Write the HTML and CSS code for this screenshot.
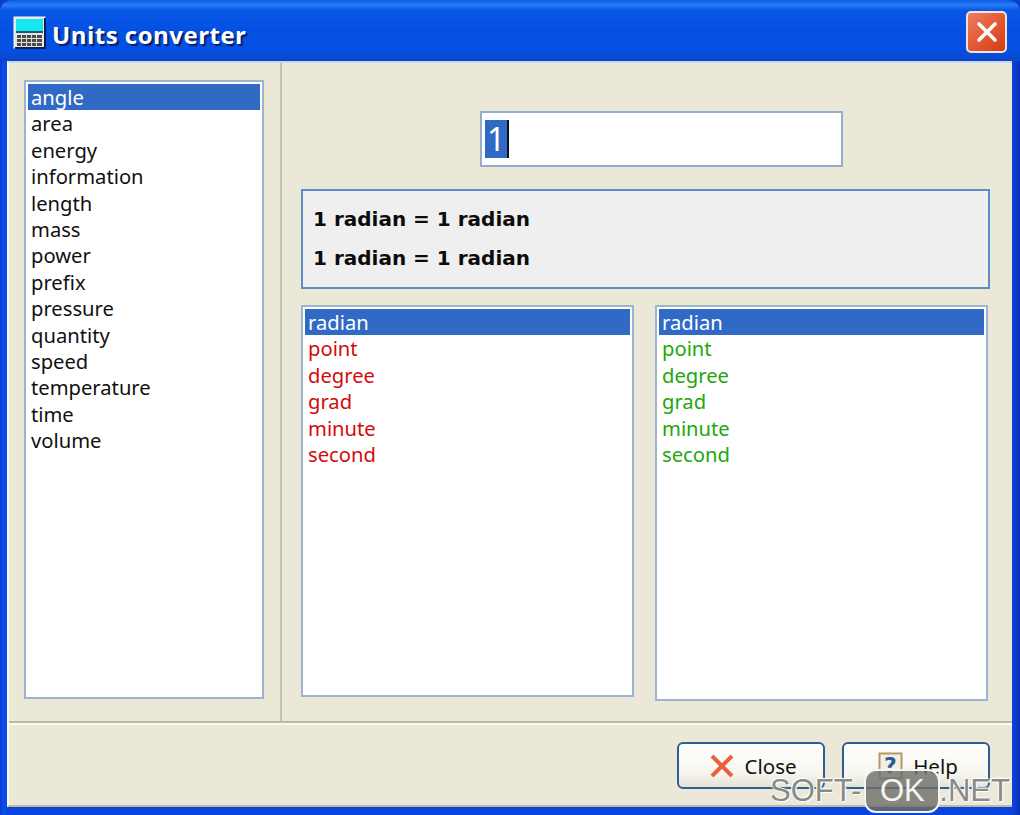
FILE: index.html
```html
<!DOCTYPE html>
<html lang="en">
<head>
<meta charset="utf-8">
<title>Units converter</title>
<link rel="stylesheet" href="styles.css">
</head>
<body>
<div class="window">
  <header class="titlebar">
    <svg class="app-icon" width="33" height="33" viewBox="0 0 33 33">
      <rect x="1" y="1" width="31" height="31" fill="#e8e8e0" stroke="#f4f4f4"/>
      <rect x="31" y="2" width="2" height="31" fill="#0a1c5c"/>
      <rect x="2" y="31" width="31" height="2" fill="#0a1c5c"/>
      <rect x="3" y="3" width="27" height="12" fill="#12e8ee"/>
      <rect x="3" y="15" width="27" height="2" fill="#1a5a78"/>
      <g fill="#4a4a4a">
        <rect x="4" y="19" width="25" height="3"/>
        <rect x="4" y="23" width="25" height="3"/>
        <rect x="4" y="27" width="25" height="3"/>
      </g>
      <g fill="#dcdcd4">
        <rect x="8" y="18" width="1" height="13"/>
        <rect x="13" y="18" width="1" height="13"/>
        <rect x="18" y="18" width="1" height="13"/>
        <rect x="23" y="18" width="1" height="13"/>
      </g>
    </svg>
    <h1 class="title">Units converter</h1>
    <button class="close-x" type="button" aria-label="Close">
      <svg width="26" height="26" viewBox="0 0 26 26"><path d="M5 5 L21 21 M21 5 L5 21" stroke="#fff" stroke-width="3.6" stroke-linecap="round"/></svg>
    </button>
  </header>
  <div class="client">
    <div class="main">
      <aside class="side">
        <ul class="list list-side">
          <li class="sel">angle</li>
          <li>area</li>
          <li>energy</li>
          <li>information</li>
          <li>length</li>
          <li>mass</li>
          <li>power</li>
          <li>prefix</li>
          <li>pressure</li>
          <li>quantity</li>
          <li>speed</li>
          <li>temperature</li>
          <li>time</li>
          <li>volume</li>
        </ul>
      </aside>
      <section class="content">
        <div class="entry-row">
          <div class="entry"><span class="entry-sel">1</span><span class="caret"></span></div>
        </div>
        <div class="result">
          <p>1 radian = 1 radian</p>
          <p>1 radian = 1 radian</p>
        </div>
        <div class="columns">
          <ul class="list list-from">
            <li class="sel">radian</li>
            <li>point</li>
            <li>degree</li>
            <li>grad</li>
            <li>minute</li>
            <li>second</li>
          </ul>
          <ul class="list list-to">
            <li class="sel">radian</li>
            <li>point</li>
            <li>degree</li>
            <li>grad</li>
            <li>minute</li>
            <li>second</li>
          </ul>
        </div>
      </section>
    </div>
    <footer class="footer">
      <button class="btn" type="button">
        <svg width="26" height="26" viewBox="0 0 26 26"><path d="M3 3 L23 23 M23 3 L3 23" stroke="#e8603c" stroke-width="4"/></svg>
        <span>Close</span>
      </button>
      <button class="btn" type="button">
        <svg width="26" height="28" viewBox="0 0 26 28"><rect x="1.5" y="1.5" width="22" height="25" fill="#f4f0e4" stroke="#b09a68" stroke-width="2"/><text x="12.5" y="21" text-anchor="middle" class="q">?</text></svg>
        <span>Help</span>
      </button>
    </footer>
  </div>
  <div class="watermark"><span>SOFT-</span><span class="wm-ok">OK</span><span>.NET</span></div>
</div>
</body>
</html>
```
FILE: styles.css
```css
* { box-sizing: border-box; }
html, body { margin: 0; padding: 0; }
body { width: 1020px; height: 815px; overflow: hidden; background: #0a3fd0; font-family: "DejaVu Sans", sans-serif; }
.window {
  position: relative;
  width: 1020px; height: 815px;
  display: flex; flex-direction: column;
  background: linear-gradient(90deg, #0a3ad8 0, #0a50e8 4px, #0a44dc 8px, #0a44dc 1012px, #0a3ccc 1016px, #0a30b0 100%);
  border-radius: 12px 12px 0 0;
  padding: 0 8px 8px 7px;
}
.titlebar {
  margin: 0 -8px 0 -7px;
  height: 61px;
  display: flex; align-items: center;
  padding: 2px 13px 0 13px;
  border-radius: 12px 12px 0 0;
  background: linear-gradient(180deg, #0a5ae8 0, #2a7cf4 5px, #0a58e8 10px, #0450e4 30px, #0450e0 50px, #0a4ad0 58px, #0a44c8 100%);
}
.app-icon { flex: none; margin-top: 1px; }
.title {
  flex: 1;
  margin: 6px 0 0 6px;
  color: #fff;
  font: bold 24px "Open Sans", sans-serif;
  letter-spacing: 0.5px;
  text-shadow: 2px 2px 1px #08206c;
}
.close-x {
  width: 41px; height: 42px;
  padding: 0;
  display: flex; align-items: center; justify-content: center;
  border: 2px solid #f0e4dc; border-radius: 5px;
  background: linear-gradient(135deg, #ec8060 0, #e45a34 50%, #d03c14 100%);
}
.client {
  flex: 1;
  display: flex; flex-direction: column;
  background: #ebe8d8;
  border-top: 2px solid #c8d8f0;
  border-left: 2px solid #fbfaf4;
  border-bottom: 2px solid #bdb8a8;
}
.main { flex: 1; display: flex; min-height: 0; border-bottom: 2px solid #bdb8a8; }
.side { width: 273px; flex: none; padding: 17px 16px 22px 15px; border-right: 2px solid #c4c0b0; }
.list {
  margin: 0; padding: 2px 2px;
  list-style: none;
  background: #fff;
  border: 2px solid #9ab4d2;
  font: 20.2px/27px "Noto Sans", sans-serif;
  color: #111;
}
.list li { padding-left: 3px; height: 26.4px; }
.list li.sel { background: #316ac5; color: #fff; }
.list-side { height: 100%; }
.content { flex: 1; padding: 0 22px 0 19px; display: flex; flex-direction: column; min-width: 0; }
.entry-row { height: 126px; padding: 48px 0 0 179px; flex: none; }
.entry {
  width: 363px; height: 56px;
  background: #fff;
  border: 2px solid #92aed0;
  display: flex; align-items: center;
  padding-left: 3px;
  font: 32px "Noto Sans", sans-serif;
}
.entry-sel { background: #316ac5; color: #fff; height: 38px; line-height: 38px; padding: 0 2px; }
.caret { width: 2px; height: 38px; background: #111; }
.result {
  height: 100px; flex: none;
  background: #efefef;
  border: 2px solid #5a8ec8;
  padding: 9px 10px;
  font: bold 20px/38.5px "DejaVu Sans", sans-serif;
  color: #0c0c0c;
}
.result p { margin: 0; }
.columns { display: flex; gap: 21px; margin-top: 16px; flex: 1; min-height: 0; }
.columns .list { width: 333px; }
.list-from { margin-bottom: 24px; }
.list-to { margin-bottom: 20px; }
.list-from li { color: #d40a0a; }
.list-to li { color: #22a80a; }
.footer {
  height: 82px; flex: none;
  display: flex; justify-content: flex-end; gap: 17px;
  padding: 17px 22px 0 0;
  border-top: 2px solid #faf9f2;
}
.btn {
  width: 148px; height: 47px;
  padding: 0 0 0 4px;
  display: flex; align-items: center; justify-content: center; gap: 9px;
  border: 2px solid #2f5f92; border-radius: 6px;
  background: linear-gradient(180deg, #ffffff 0, #f6f5ee 70%, #e4e1d4 100%);
  font: 20.5px "Noto Sans", sans-serif;
  color: #111;
}
.q { font: bold 22px "DejaVu Sans", sans-serif; fill: #2a5a9a; }
.watermark {
  position: absolute;
  left: 770px; top: 769px;
  display: flex; align-items: center;
  height: 44px;
  font: 31px "Liberation Sans", sans-serif;
  color: #8a8a86;
  text-shadow: 0 0 2px #fff, 0 0 2px #fff, 1px 1px 0 #fff, -1px -1px 0 #fff;
}
.wm-ok {
  display: flex; align-items: center; justify-content: center;
  width: 76px; height: 44px;
  margin: 0 -1px 0 3px;
  background: rgba(110,110,106,.8);
  border: 2px solid #f4f4f0;
  border-radius: 12px;
  color: #f4f4f0;
  text-shadow: none;
}
```
